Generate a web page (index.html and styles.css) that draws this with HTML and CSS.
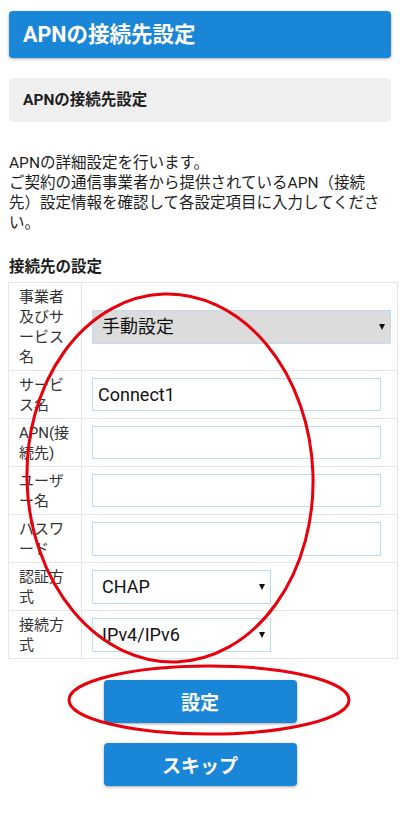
FILE: index.html
```html
<!DOCTYPE html>
<html lang="ja">
<head>
    <meta charset="UTF-8">
    <meta name="viewport" content="width=device-width, initial-scale=1.0">
    <title>APNの接続先設定</title>
    <link rel="stylesheet" href="styles.css">
</head>
<body>
    <div class="page">
        <h1 class="page-title">APNの接続先設定</h1>

        <div class="section-box">APNの接続先設定</div>

        <p class="intro">APNの詳細設定を行います。<br>ご契約の通信事業者から提供されているAPN（接続先）設定情報を確認して各設定項目に入力してください。</p>

        <h2 class="sub-title">接続先の設定</h2>

        <table class="apn-table">
            <tr class="row-tall">
                <th>事業者及びサービス名</th>
                <td>
                    <div class="select-wrap wide">
                        <select class="preset">
                            <option>手動設定</option>
                        </select>
                    </div>
                </td>
            </tr>
            <tr>
                <th>サービス名</th>
                <td><input type="text" class="field" value="Connect1"></td>
            </tr>
            <tr>
                <th>APN(接続先)</th>
                <td><input type="text" class="field"></td>
            </tr>
            <tr>
                <th>ユーザー名</th>
                <td><input type="text" class="field"></td>
            </tr>
            <tr>
                <th>パスワード</th>
                <td><input type="password" class="field field-pass"></td>
            </tr>
            <tr>
                <th>認証方式</th>
                <td>
                    <div class="select-wrap">
                        <select>
                            <option>CHAP</option>
                            <option>PAP</option>
                        </select>
                    </div>
                </td>
            </tr>
            <tr>
                <th>接続方式</th>
                <td>
                    <div class="select-wrap">
                        <select>
                            <option>IPv4/IPv6</option>
                            <option>IPv4</option>
                        </select>
                    </div>
                </td>
            </tr>
        </table>

        <div class="actions">
            <button class="btn">設定</button>
            <button class="btn">スキップ</button>
        </div>
    </div>

    <!-- 赤丸の注釈 -->
    <svg class="marks" width="400" height="816" viewBox="0 0 400 816">
        <ellipse cx="170" cy="478" rx="143" ry="184" transform="rotate(-2 170 478)" />
        <ellipse cx="209" cy="700" rx="140" ry="34" />
    </svg>
</body>
</html>
```

FILE: styles.css
```css
:root {
    --blue: #1a86d8;
    --field-border: #bcdcf4;
    --line: #e6e6e6;
    --text: #1e1e1e;
}

body {
    margin: 0;
    font-family: Roboto, "Noto Sans CJK JP", sans-serif;
    color: var(--text);
    background: #fff;
}

.page {
    padding: 11px 9px 30px;
}

.page-title {
    margin: 0;
    height: 47px;
    line-height: 47px;
    padding-left: 14px;
    background-color: var(--blue);
    border-radius: 4px;
    box-shadow: 0 1px 3px rgba(0, 0, 0, 0.35);
    color: #fff;
    font-size: 21.5px;
    font-weight: bold;
}

.section-box {
    margin-top: 20px;
    height: 44px;
    line-height: 44px;
    padding-left: 14px;
    background-color: #efefef;
    border-radius: 4px;
    font-size: 15.5px;
    font-weight: bold;
}

.intro {
    width: 373px;
    margin: 31px 0 0;
    font-size: 15.5px;
    line-height: 20px;
    text-spacing-trim: space-all;
}

.sub-title {
    margin: 24px 0 0;
    font-size: 15.5px;
    line-height: 20px;
    font-weight: bold;
}

.apn-table {
    margin: 5px 0 0 -1px;
    width: 390px;
    border-collapse: collapse;
}

.apn-table th,
.apn-table td {
    border: 1px solid var(--line);
    height: 39px;
}

.apn-table th {
    width: 56px;
    padding: 4px 6px 3px 10px;
    text-align: left;
    font-size: 15px;
    line-height: 20px;
    font-weight: normal;
    color: #333;
}

.apn-table td {
    padding: 0 0 0 10px;
    vertical-align: middle;
}

.field {
    display: block;
    box-sizing: border-box;
    width: 289px;
    height: 33px;
    margin: 0;
    padding: 0 5px;
    border: 1px solid var(--field-border);
    border-radius: 0;
    font-family: Roboto, "Noto Sans CJK JP", sans-serif;
    font-size: 18px;
    color: #111;
    background: #fff;
    outline: none;
}

.field-pass {
    height: 34px;
}

.select-wrap {
    position: relative;
    width: 179px;
}

.select-wrap.wide {
    width: 299px;
}

.select-wrap::after {
    content: "";
    position: absolute;
    right: 6px;
    top: 50%;
    margin-top: -3px;
    border-left: 3.5px solid transparent;
    border-right: 3.5px solid transparent;
    border-top: 6px solid #111;
}

.select-wrap select {
    display: block;
    box-sizing: border-box;
    width: 100%;
    height: 34px;
    margin: 0;
    padding: 0 20px 0 9px;
    border: 1px solid var(--field-border);
    border-radius: 0;
    background: #fff;
    font-family: Roboto, "Noto Sans CJK JP", sans-serif;
    font-size: 18px;
    color: #111;
    appearance: none;
    -webkit-appearance: none;
}

.select-wrap select.preset {
    background-color: #dcdcdc;
}

.actions {
    display: flex;
    flex-direction: column;
    align-items: center;
    gap: 20px;
    margin-top: 21px;
}

.btn {
    width: 193px;
    height: 43px;
    border: none;
    border-radius: 4px;
    background-color: var(--blue);
    box-shadow: 0 1px 3px rgba(0, 0, 0, 0.35);
    color: #fff;
    font-family: Roboto, "Noto Sans CJK JP", sans-serif;
    font-size: 19px;
    font-weight: bold;
    cursor: pointer;
}

.marks {
    position: absolute;
    top: 0;
    left: 0;
    pointer-events: none;
}

.marks ellipse {
    fill: none;
    stroke: #e8000b;
    stroke-width: 3;
}
```
